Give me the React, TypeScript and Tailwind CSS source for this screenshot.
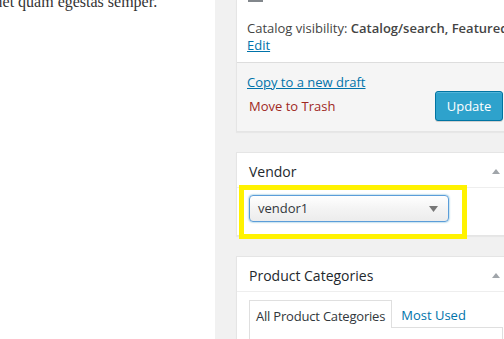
export default function App() {
  return (
    <div className="w-[504px] h-[339px] overflow-hidden bg-[#f1f1f1] flex font-['Open_Sans',sans-serif] text-[13px] text-[#444]">
      <div className="w-[215px] shrink-0 bg-white h-full overflow-hidden">
        <p className="font-['Liberation_Serif',serif] text-[16px] text-[#333] leading-[24px] -mt-[10px] -ml-[17px] whitespace-nowrap">
          amet quam egestas semper.
        </p>
      </div>
      <div className="ml-[21px] w-[280px] shrink-0 flex flex-col">
        {/* Publish panel */}
        <div className="bg-white border-x border-b border-[#e5e5e5] shadow-[0_1px_1px_rgba(0,0,0,0.04)]">
          <div className="pl-[10px] pb-[8px]">
            <div className="w-[15px] h-[2px] bg-[#82878c] ml-[1px]" />
            <div className="mt-[18px] leading-[17px] whitespace-nowrap">
              Catalog visibility: <strong className="font-semibold">Catalog/search, Featured</strong>
            </div>
            <a className="block w-fit leading-[17px] text-[#0073aa] underline">Edit</a>
          </div>
          <div className="border-t border-[#dddddd] bg-[#f5f5f5] flex justify-between">
            <div className="pl-[10px] pt-[11px]">
              <a className="block leading-[17px] text-[#0073aa] underline">Copy to a new draft</a>
              <a className="block leading-[17px] mt-[7px] ml-[2px] text-[#a0281e]">Move to Trash</a>
            </div>
            <button className="mt-[28px] mb-[10px] mr-[12px] h-[30px] w-[68px] rounded-[3px] bg-[#2ea2cc] border border-[#0074a2] text-white text-[13px] leading-[28px] shadow-[inset_0_1px_0_rgba(120,200,230,0.5),0_1px_0_rgba(0,0,0,0.15)]">
              Update
            </button>
          </div>
        </div>

        {/* Vendor panel */}
        <div className="relative mt-[20px] bg-white border border-[#e5e5e5] shadow-[0_1px_1px_rgba(0,0,0,0.04)]">
          <div className="h-[35px] border-b border-[#eeeeee] flex items-center pl-[12px] pr-[15px]">
            <span className="text-[14px] leading-[19px] text-[#23282d] mt-[2px]">Vendor</span>
            <svg className="ml-auto mt-[2px]" width="8" height="5" viewBox="0 0 8 5">
              <polygon points="4,0 8,5 0,5" fill="#a0a5aa" />
            </svg>
          </div>
          <div className="pt-[7px] pl-[12px] pb-[13px]">
            <div className="w-[200px] h-[27px] rounded-[4px] border border-[#5b9dd9] shadow-[0_0_2px_rgba(30,140,190,0.8)] bg-gradient-to-b from-white via-[#f4f4f4] to-[#ececec] flex items-center pl-[8px] pr-[10px]">
              <span className="text-[13px] text-[#32373c] leading-[17px]">vendor1</span>
              <svg className="ml-auto" width="9" height="6" viewBox="0 0 9 6">
                <polygon points="0,0 9,0 4.5,6" fill="#777" />
              </svg>
            </div>
          </div>
          <div className="absolute left-[2px] top-[32px] w-[228px] h-[54px] border-[5px] border-[#fff200]" />
        </div>

        {/* Product Categories panel */}
        <div className="mt-[20px] bg-white border border-[#e5e5e5] shadow-[0_1px_1px_rgba(0,0,0,0.04)]">
          <div className="h-[35px] border-b border-[#eeeeee] flex items-center pl-[12px] pr-[15px]">
            <span className="text-[14px] leading-[19px] text-[#23282d] mt-[2px]">Product Categories</span>
            <svg className="ml-auto mt-[2px]" width="8" height="5" viewBox="0 0 8 5">
              <polygon points="4,0 8,5 0,5" fill="#a0a5aa" />
            </svg>
          </div>
          <div className="pt-[8px] pl-[12px] pr-[12px]">
            <div className="flex items-end">
              <div className="relative z-10 -mb-px h-[28px] border border-b-0 border-[#dfdfdf] bg-white px-[6px] pt-[7px] text-[#32373c] leading-[17px] tracking-[-0.2px]">
                All Product Categories
              </div>
              <a className="ml-[3px] px-[6px] h-[27px] pt-[7px] text-[#0073aa] leading-[17px]">Most Used</a>
            </div>
            <div className="h-[200px] border border-[#dfdfdf] bg-white" />
          </div>
        </div>
      </div>
    </div>
  );
}
